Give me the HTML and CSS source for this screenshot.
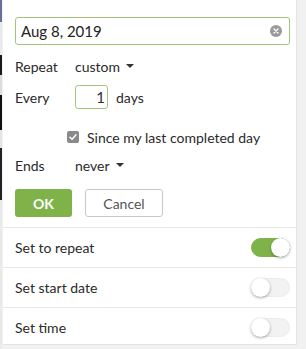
FILE: index.html
```html
<!DOCTYPE html>
<html>
<head>
<meta charset="utf-8">
<link rel="stylesheet" href="styles.css">
</head>
<body>
<div class="page">
  <div class="edge"></div>
  <div class="panel">
    <div class="arrow"></div>
    <div class="form">
      <div class="date-input">
        <span class="date-text">Aug 8, 2019</span>
        <span class="clear">
          <svg width="12" height="12" viewBox="0 0 12 12"><circle cx="6" cy="6" r="6" fill="#9a9a9a"/><path d="M4 4 L8 8 M8 4 L4 8" stroke="#fff" stroke-width="1.4" stroke-linecap="round"/></svg>
        </span>
      </div>
      <div class="row r-repeat">
        <span class="label">Repeat</span>
        <span class="select">custom <span class="caret"></span></span>
      </div>
      <div class="row r-every">
        <span class="label">Every</span>
        <span class="num">1</span>
        <span class="unit">days</span>
      </div>
      <div class="row r-check">
        <span class="checkbox">
          <svg width="10" height="10" viewBox="0 0 10 10"><path d="M2 5.2 L4.1 7.2 L8 2.8" stroke="#fff" stroke-width="1.5" fill="none" stroke-linecap="round" stroke-linejoin="round"/></svg>
        </span>
        <span class="check-label">Since my last completed day</span>
      </div>
      <div class="row r-ends">
        <span class="label">Ends</span>
        <span class="select">never <span class="caret"></span></span>
      </div>
      <div class="buttons">
        <span class="btn ok">OK</span>
        <span class="btn cancel">Cancel</span>
      </div>
    </div>
    <div class="setting">
      <span>Set to repeat</span>
      <span class="toggle on"><span class="knob"></span></span>
    </div>
    <div class="setting">
      <span>Set start date</span>
      <span class="toggle"><span class="knob"></span></span>
    </div>
    <div class="setting">
      <span>Set time</span>
      <span class="toggle"><span class="knob"></span></span>
    </div>
  </div>
</div>
</body>
</html>
```
FILE: styles.css
```css
html, body {
  margin: 0;
  padding: 0;
}
body {
  width: 306px;
  height: 349px;
  background: #f1f1f1;
  font-family: Lato, "Open Sans", sans-serif;
  font-size: 14px;
  color: #2a2a2a;
  overflow: hidden;
}
.page {
  display: flex;
  height: 349px;
}
.edge {
  width: 2px;
  height: 349px;
  background: linear-gradient(to bottom, #6a6f99 0, #6a6f99 22px, #e9e9ee 22px, #e9e9ee 55px, #1a1a1a 55px, #1a1a1a 75px, #dcdcdc 75px, #dcdcdc 95px, #111 95px, #111 130px, #e5e5e5 130px, #e5e5e5 148px, #222 148px, #222 200px, #e9e9e9 200px);
  flex: none;
}
.panel {
  position: relative;
  margin-left: 1px;
  width: 294px;
  height: 345px;
  background: #fff;
  border-right: 1px solid #e4e4e4;
  border-bottom: 1px solid #e4e4e4;
  box-sizing: border-box;
  display: flex;
  flex-direction: column;
}
.arrow {
  position: absolute;
  top: 0;
  left: 142px;
  width: 20px;
  height: 2px;
  background: #fff;
}
.form {
  padding: 17px 6px 0 12px;
  height: 228px;
  flex: none;
  border-bottom: 1px solid #e6e6e6;
  box-sizing: border-box;
}
.date-input {
  height: 28px;
  border: 1px solid #a3c67a;
  border-radius: 3px;
  box-sizing: border-box;
  display: flex;
  align-items: center;
  justify-content: space-between;
  padding: 0 7px 0 5px;
  font-size: 15px;
}
.date-text {
  color: #222;
  line-height: 1;
}
.clear {
  display: flex;
}
.row {
  display: flex;
  align-items: center;
}
.label {
  width: 60px;
}
.r-repeat {
  margin-top: 11px;
  height: 20px;
}
.select {
  display: flex;
  align-items: center;
}
.caret {
  display: inline-block;
  width: 0;
  height: 0;
  border-left: 4px solid transparent;
  border-right: 4px solid transparent;
  border-top: 4px solid #333;
  margin-left: 6px;
}
.r-every {
  margin-top: 9px;
  height: 24px;
}
.num {
  width: 33px;
  height: 24px;
  box-sizing: border-box;
  border: 1px solid #a3c67a;
  border-radius: 3px;
  display: flex;
  align-items: center;
  justify-content: flex-end;
  padding-right: 2px;
  font-size: 15px;
}
.unit {
  margin-left: 8px;
}
.r-check {
  margin-top: 18px;
  height: 20px;
  padding-left: 52px;
}
.checkbox {
  width: 12px;
  height: 12px;
  background: #8a8a8a;
  border-radius: 2px;
  display: flex;
  align-items: center;
  justify-content: center;
  margin-right: 8px;
}
.r-ends {
  margin-top: 8px;
  height: 20px;
}
.buttons {
  display: flex;
  gap: 13px;
  margin-top: 14px;
}
.btn {
  height: 28px;
  border-radius: 3px;
  box-sizing: border-box;
  display: flex;
  align-items: center;
  justify-content: center;
  font-size: 14px;
}
.ok {
  width: 57px;
  background: #7fb34a;
  color: #fff;
  font-weight: 700;
}
.cancel {
  width: 78px;
  border: 1px solid #c8c8c8;
  color: #555;
}
.setting {
  height: 39px;
  flex: none;
  display: flex;
  align-items: center;
  justify-content: space-between;
  padding: 0 6px 0 12px;
  border-bottom: 1px solid #e6e6e6;
}
.setting:last-child {
  border-bottom: none;
}
.toggle {
  position: relative;
  width: 39px;
  height: 19px;
  border-radius: 10px;
  background: #f2f2f2;
  border: 1px solid #ececec;
  box-sizing: border-box;
}
.toggle.on {
  background: #7fb34a;
  border-color: #7fb34a;
}
.knob {
  position: absolute;
  top: -1px;
  left: -1px;
  width: 19px;
  height: 19px;
  border-radius: 50%;
  background: #fff;
  box-shadow: 0 1px 3px rgba(0,0,0,0.35);
}
.toggle.on .knob {
  left: auto;
  right: -1px;
}
```
